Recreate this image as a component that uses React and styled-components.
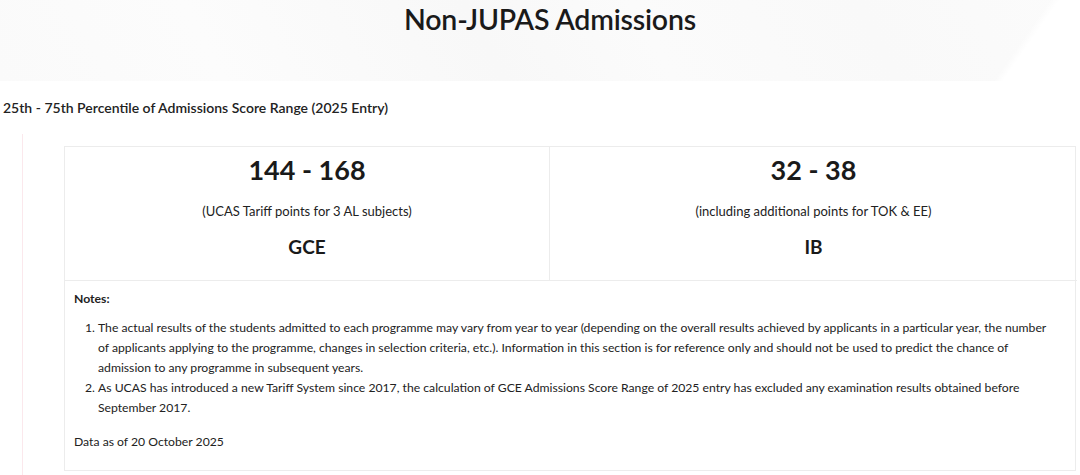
import styled, { createGlobalStyle } from "styled-components";

const GlobalStyle = createGlobalStyle`
  body {
    margin: 0;
    background: #fff;
    font-family: Lato, "Open Sans", sans-serif;
    color: #222;
  }
`;

const Banner = styled.div`
  height: 81px;
  display: flex;
  justify-content: center;
  padding-left: 20px;
  background:
    linear-gradient(125deg, transparent 92.4%, #fff 93.2%),
    linear-gradient(62deg, #fafafa 0%, #fcfcfc 20%, #f8f8f8 45%, #fbfbfb 60%, #f9f9f9 80%, #fbfbfb 100%);
  h1 {
    margin: 0;
    padding-top: 2px;
    font-size: 28.5px;
    font-weight: 600;
    color: #1a1a1a;
    letter-spacing: -0.2px;
  }
`;

const Subtitle = styled.h3`
  margin: 18px 0 0 3px;
  font-size: 14px;
  font-weight: 600;
  color: #222;
`;

const Section = styled.div`
  margin: 18px 0 0 22px;
  padding: 12px 4px 6px 41px;
  border-left: 1px solid #fbe8ec;
`;

const Table = styled.div`
  display: grid;
  grid-template-columns: 484px 528px;
  border: 1px solid #ececec;
`;

const ScoreCell = styled.div`
  display: flex;
  flex-direction: column;
  align-items: center;
  height: 133px;
  border-bottom: 1px solid #ececec;
  border-left: ${(p) => (p.$divider ? "1px solid #ececec" : "none")};
`;

const Range = styled.div`
  margin-top: 6px;
  font-size: 27px;
  font-weight: 700;
  color: #1a1a1a;
`;

const Caption = styled.div`
  margin-top: 17px;
  font-size: 13px;
  color: #222;
`;

const Exam = styled.div`
  margin-top: 16px;
  font-size: 19px;
  font-weight: 700;
  color: #1a1a1a;
`;

const Notes = styled.div`
  grid-column: 1 / span 2;
  padding: 8px 22px 18px 9px;
  font-size: 12.2px;
  line-height: 20px;
  color: #222;
  strong {
    font-weight: 700;
  }
  ol {
    margin: 9px 0 14px;
    padding-left: 24px;
  }
  p {
    margin: 0;
  }
`;

const scores = [
  { range: "144 - 168", caption: "(UCAS Tariff points for 3 AL subjects)", exam: "GCE" },
  { range: "32 - 38", caption: "(including additional points for TOK & EE)", exam: "IB" },
];

export default function App() {
  return (
    <>
      <GlobalStyle />
      <Banner>
        <h1>Non-JUPAS Admissions</h1>
      </Banner>
      <Subtitle>25th - 75th Percentile of Admissions Score Range (2025 Entry)</Subtitle>
      <Section>
        <Table>
          {scores.map((s, i) => (
            <ScoreCell key={s.exam} $divider={i > 0}>
              <Range>{s.range}</Range>
              <Caption>{s.caption}</Caption>
              <Exam>{s.exam}</Exam>
            </ScoreCell>
          ))}
          <Notes>
            <strong>Notes:</strong>
            <ol>
              <li>
                The actual results of the students admitted to each programme may vary from year to year
                (depending on the overall results achieved by applicants in a particular year, the number of
                applicants applying to the programme, changes in selection criteria, etc.). Information in this
                section is for reference only and should not be used to predict the chance of admission to any
                programme in subsequent years.
              </li>
              <li>
                As UCAS has introduced a new Tariff System since 2017, the calculation of GCE Admissions Score
                Range of 2025 entry has excluded any examination results obtained before September 2017.
              </li>
            </ol>
            <p>Data as of 20 October 2025</p>
          </Notes>
        </Table>
      </Section>
    </>
  );
}
